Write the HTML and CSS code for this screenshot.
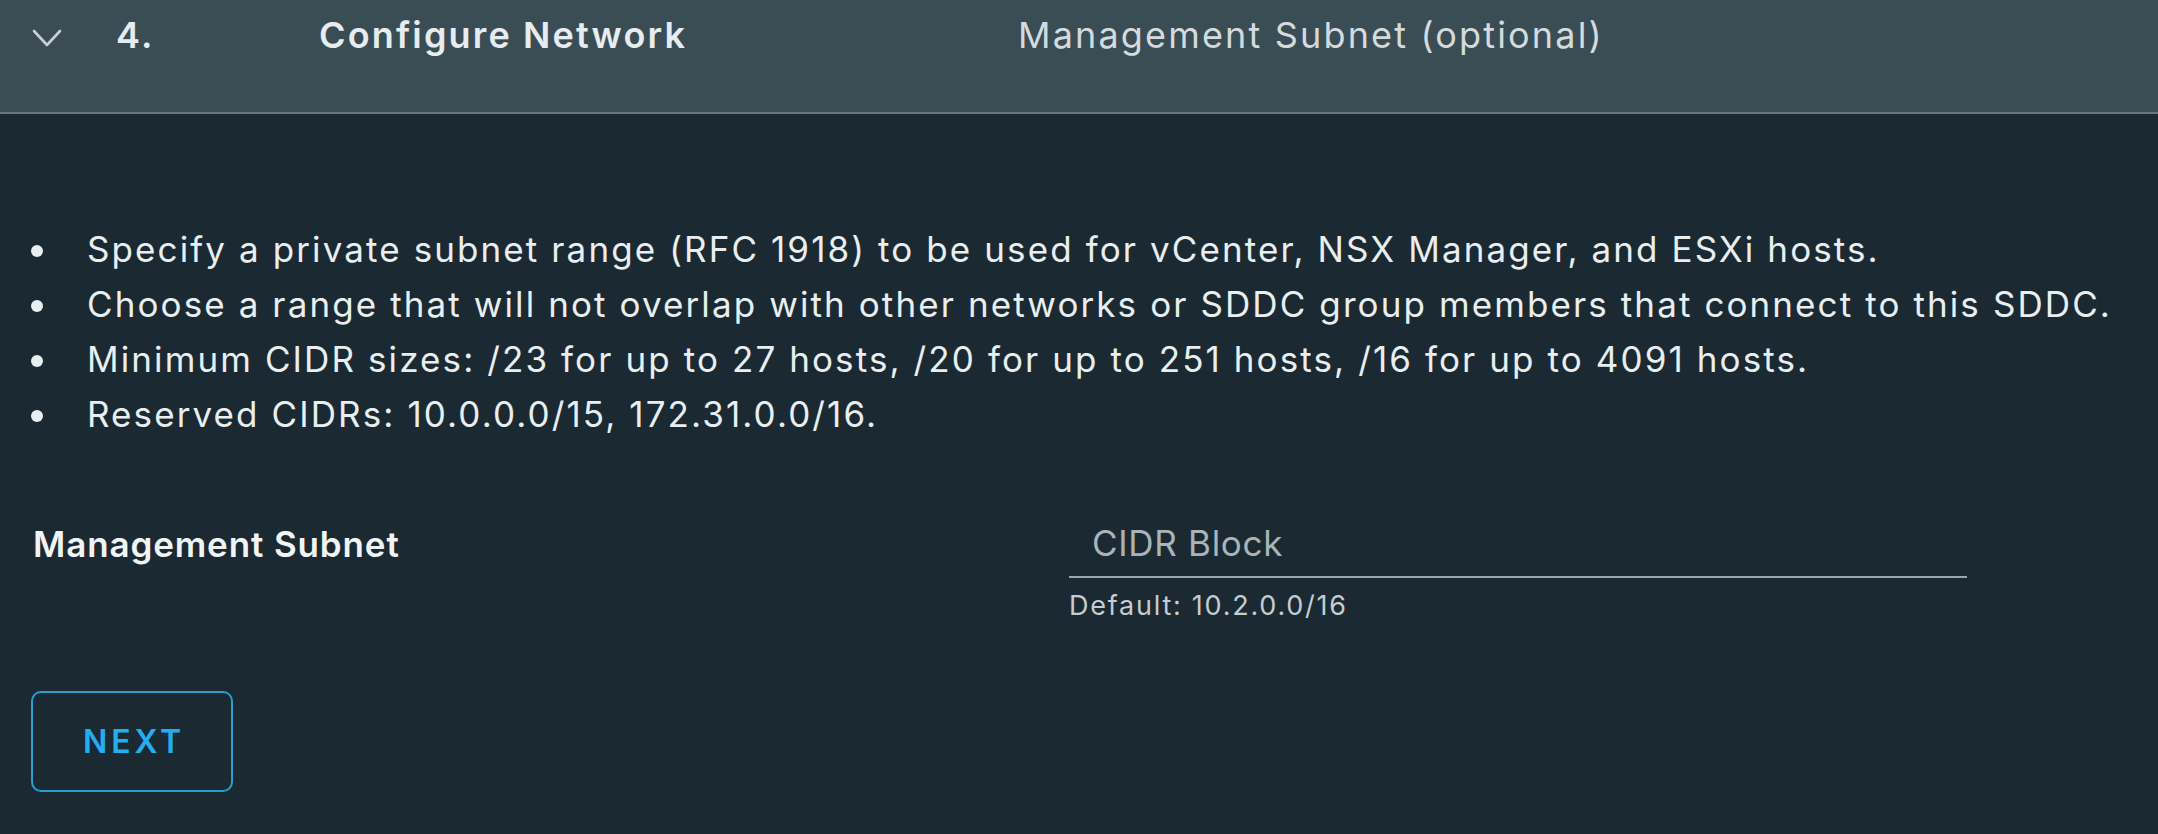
FILE: index.html
```html
<!DOCTYPE html>
<html lang="en">
<head>
<meta charset="utf-8">
<title>Configure Network</title>
<link rel="stylesheet" href="styles.css">
</head>
<body>
<div class="step">
  <header class="step-header">
    <svg class="chevron" width="30" height="20" viewBox="0 0 30 20" aria-hidden="true">
      <polyline points="2,3 15,17 28,3" fill="none" stroke="#c9d0d3" stroke-width="2.6" stroke-linecap="round" stroke-linejoin="round"/>
    </svg>
    <span class="step-num">4.</span>
    <span class="step-title">Configure Network</span>
    <span class="step-summary">Management Subnet (optional)</span>
  </header>
  <section class="step-body">
    <ul class="notes">
      <li>Specify a private subnet range (RFC 1918) to be used for vCenter, NSX Manager, and ESXi hosts.</li>
      <li>Choose a range that will not overlap with other networks or SDDC group members that connect to this SDDC.</li>
      <li>Minimum CIDR sizes: /23 for up to 27 hosts, /20 for up to 251 hosts, /16 for up to 4091 hosts.</li>
      <li>Reserved CIDRs: 10.0.0.0/15, 172.31.0.0/16.</li>
    </ul>
    <div class="form-row">
      <label class="form-label" for="cidr">Management Subnet</label>
      <div class="form-control">
        <input id="cidr" class="text-input" type="text" placeholder="CIDR Block">
        <div class="helper">Default: 10.2.0.0/16</div>
      </div>
    </div>
    <button class="btn-outline" type="button">NEXT</button>
  </section>
</div>
</body>
</html>
```
FILE: styles.css
```css
html, body {
  margin: 0;
  padding: 0;
  background: #1b2a32;
}
body {
  font-family: "Inter", "Open Sans", sans-serif;
  color: #e9eef0;
  width: 2158px;
  height: 834px;
  overflow: hidden;
}
.step-header {
  display: flex;
  align-items: flex-start;
  box-sizing: border-box;
  height: 114px;
  padding: 10px 0 0 32px;
  background: #3a4d55;
  border-bottom: 2px solid #66777e;
  font-size: 36px;
  line-height: 50px;
  letter-spacing: 0.06em;
}
.chevron {
  display: block;
  flex-shrink: 0;
  margin-top: 18px;
  width: 30px;
  height: 20px;
}
.step-num {
  box-sizing: border-box;
  width: 257px;
  padding-left: 54px;
  font-weight: 600;
  color: #e6ecef;
}
.step-title {
  width: 699px;
  font-weight: 600;
  color: #e6ecef;
}
.step-summary {
  font-weight: 400;
  color: #d3dbde;
}
.step-body {
  padding: 108px 0 0 31px;
}
.notes {
  list-style: none;
  margin: 0;
  padding: 0;
  font-size: 35px;
  line-height: 55px;
  letter-spacing: 0.06em;
  color: #e9eef0;
}
.notes li {
  display: flex;
  align-items: flex-start;
}
.notes li::before {
  content: "";
  flex-shrink: 0;
  width: 12px;
  height: 12px;
  margin: 23px 44px 0 0;
  border-radius: 50%;
  background: #e9eef0;
}
.form-row {
  display: flex;
  align-items: flex-start;
  margin-top: 73px;
}
.form-label {
  width: 1036px;
  margin-top: 2px;
  padding-left: 2px;
  font-size: 35px;
  line-height: 55px;
  font-weight: 600;
  letter-spacing: 0.025em;
  color: #f1f4f5;
}
.form-control {
  width: 898px;
}
.text-input {
  display: block;
  box-sizing: border-box;
  width: 898px;
  height: 63px;
  margin: 0;
  padding: 0 0 6px 23px;
  border: none;
  border-bottom: 2px solid #9aa7ad;
  background: transparent;
  font-family: "Inter", "Open Sans", sans-serif;
  font-size: 35px;
  line-height: 55px;
  letter-spacing: 0.02em;
  color: #e9eef0;
  outline: none;
}
.text-input::placeholder {
  color: #a9b4b9;
  opacity: 1;
}
.helper {
  margin-top: 13px;
  font-size: 27px;
  line-height: 30px;
  letter-spacing: 0.065em;
  color: #c5cdd1;
}
.btn-outline {
  display: flex;
  align-items: center;
  justify-content: center;
  box-sizing: border-box;
  width: 202px;
  height: 101px;
  margin-top: 70px;
  padding: 0 0 0 4px;
  border: 2px solid #2a9cd0;
  border-radius: 10px;
  background: transparent;
  font-family: "Inter", "Open Sans", sans-serif;
  font-size: 32px;
  font-weight: 600;
  letter-spacing: 0.12em;
  color: #23aef2;
}
```
